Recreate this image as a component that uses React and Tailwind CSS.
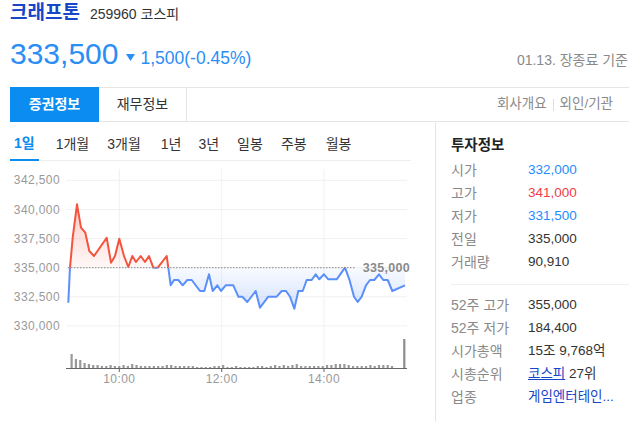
const PTS = [[68.3,301.7],[70,266.7],[72.7,236.7],[77,203.3],[81,226.7],[85.3,231.7],[89.3,250],[94,255],[106.7,236.7],[111,261.7],[115,255],[119.3,237.7],[124,255],[128.3,266],[132.3,255],[136,261],[140.7,255],[145,261],[149,255],[153.3,266.7],[157.7,266.7],[166.7,255],[168.3,266.7],[170.7,284.3],[174,279],[178.3,279],[182.7,284.3],[187.3,279],[191.7,279],[200,290],[204.3,290],[209,273.3],[212.7,290],[217.3,284.3],[221,290],[225.7,284.3],[233.3,284.3],[238.3,295.7],[242.3,295.7],[247.3,301],[255.7,290],[260,306.7],[268.3,295.7],[276.7,295.7],[281.7,290],[286,290],[290,295.7],[294.3,307.7],[298.3,290],[302.7,290],[306.7,279],[311.7,279],[315.7,273.3],[319.3,278.3],[324,273.3],[328.3,278.3],[336.7,278.3],[345,266.7],[349.3,278.3],[354,295.7],[357.7,301],[361.7,295.7],[366,284.3],[370,279],[374.3,279],[379,273.3],[383.3,279],[387.7,279],[392.3,290],[405,284.3]];

const VOL = [14,9,8,5,4,3,3,2,2,3,2,2,3,2,4,3,2,2,2,2,2,2,3,3,2,2,2,2,2,1,1,1,1,2,2,3,1,1,2,1,1,1,1,2,2,1,2,3,2,3,2,3,4,2,2,2,2,2,2,3,3,4,4,4,3,2,2,2,2,3,2,3,3,3,2];

const BASE = 266.7;
const GRID_Y = [179.4, 208.5, 237.6, 266.7, 295.8, 324.9];
const Y_LABELS = ["342,500", "340,000", "337,500", "335,000", "332,500", "330,000"];
const X_TICKS = [[119.3, "10:00"], [221.7, "12:00"], [324, "14:00"]];

function Chart() {
  const line = PTS.map((p, i) => `${i ? "L" : "M"}${p[0]},${p[1]}`).join(" ");
  const area = `${line} L${PTS[PTS.length - 1][0]},${BASE} L${PTS[0][0]},${BASE} Z`;
  return (
    <svg width="425" height="262" viewBox="10 160 425 262" className="block">
      <defs>
        <clipPath id="above"><rect x="0" y="0" width="640" height={BASE} /></clipPath>
        <clipPath id="below"><rect x="0" y={BASE} width="640" height="200" /></clipPath>
        <linearGradient id="redg" x1="0" y1="200" x2="0" y2={BASE} gradientUnits="userSpaceOnUse">
          <stop offset="0" stopColor="#f5533f" stopOpacity="0.32" />
          <stop offset="1" stopColor="#f5533f" stopOpacity="0.04" />
        </linearGradient>
        <linearGradient id="blueg" x1="0" y1={BASE} x2="0" y2="308" gradientUnits="userSpaceOnUse">
          <stop offset="0" stopColor="#5b8ff9" stopOpacity="0.04" />
          <stop offset="1" stopColor="#5b8ff9" stopOpacity="0.26" />
        </linearGradient>
      </defs>
      {GRID_Y.map((y) => (
        <line key={y} x1="66" x2="407" y1={y} y2={y} stroke="#f1f1f1" strokeWidth="1" />
      ))}
      {X_TICKS.map(([x]) => (
        <line key={x} x1={x} x2={x} y1="168" y2="367" stroke="#f1f1f1" strokeWidth="1" />
      ))}
      {GRID_Y.map((y, i) => (
        <text key={i} x="60" y={y} textAnchor="end" dominantBaseline="central" fontSize="12" letterSpacing="0.4" fill="#999" fontFamily="Liberation Sans, sans-serif">{Y_LABELS[i]}</text>
      ))}
      <path d={area} fill="url(#redg)" clipPath="url(#above)" />
      <path d={area} fill="url(#blueg)" clipPath="url(#below)" />
      <line x1="68" x2="356" y1={BASE} y2={BASE} stroke="#888" strokeWidth="1" strokeDasharray="1.5 1.5" />
      <path d={line} fill="none" stroke="#f4533d" strokeWidth="2" strokeLinejoin="round" clipPath="url(#above)" />
      <path d={line} fill="none" stroke="#5b8ff9" strokeWidth="2" strokeLinejoin="round" clipPath="url(#below)" />
      <text x="410" y={BASE} textAnchor="end" dominantBaseline="central" fontSize="12.5" fontWeight="700" letterSpacing="0.3" fill="#8a8a8a" fontFamily="Liberation Sans, sans-serif">335,000</text>
      {VOL.map((h, i) => (
        <rect key={i} x={70.5 + i * 4.33} y={367 - h} width="2.2" height={h} fill="#999" />
      ))}
      <rect x="403.2" y="338" width="2.2" height="29" fill="#8c8c8c" />
      <line x1="66" x2="407" y1="367.5" y2="367.5" stroke="#666" strokeWidth="1" />
      {X_TICKS.map(([x, t]) => (
        <g key={t}>
          <line x1={x} x2={x} y1="367" y2="371" stroke="#666" strokeWidth="1" />
          <text x={x} y="378" textAnchor="middle" dominantBaseline="central" fontSize="12" letterSpacing="0.4" fill="#999" fontFamily="Liberation Sans, sans-serif">{t}</text>
        </g>
      ))}
    </svg>
  );
}

function Row({ label, children }) {
  return (
    <div className="flex items-center h-[23px]">
      <span className="w-[77px] shrink-0 text-[14px] text-[#8a8a8a]">{label}</span>
      <span className="whitespace-nowrap text-[13.5px] text-[#333]">{children}</span>
    </div>
  );
}

export default function App() {
  return (
    <div className="w-[629px] h-[422px] overflow-hidden bg-white text-[#333] font-['Liberation_Sans','Noto_Sans_CJK_KR',sans-serif]">
      <div className="flex items-baseline pl-[10px] h-[28px] pt-[1px]">
        <span className="text-[19px] font-bold text-[#1846c8] leading-[24px]">크래프톤</span>
        <span className="ml-[10px] text-[14px] text-[#333]">259960 코스피</span>
      </div>
      <div className="flex items-baseline justify-between pl-[10px] pr-[1px] h-[59px] pt-[8px]">
        <div className="flex items-baseline text-[#2a8ef5]">
          <span className="text-[30px] leading-[36px]">333,500</span>
          <svg width="9" height="7" viewBox="0 0 9 7" className="ml-[8px] mr-[5px] self-center translate-y-[3px]">
            <path d="M0 0 H9 L4.5 7 Z" fill="#2a8ef5" />
          </svg>
          <span className="text-[17.5px]">1,500(-0.45%)</span>
        </div>
        <span className="text-[14px] text-[#8a8a8a] translate-y-[1px]">01.13. 장종료 기준</span>
      </div>
      <div className="flex h-[35px] ml-[10px]">
        <div className="w-[89px] bg-[#0b8cf0] text-white text-[14px] font-bold flex items-center justify-center">증권정보</div>
        <div className="w-[88px] border-y border-r border-[#e5e5e5] text-[14px] text-[#333] flex items-center justify-center">재무정보</div>
        <div className="flex-1 border-y border-[#e5e5e5] flex items-center justify-end pr-[16px] text-[13.5px] text-[#8a8a8a]">
          <span>회사개요</span>
          <span className="mx-[6px] w-px h-[12px] bg-[#ddd]" />
          <span>외인/기관</span>
        </div>
      </div>
      <div className="flex">
        <div className="w-[425px] ml-[10px]">
          <div className="flex h-[39px] w-[401px] border-b border-[#eee] text-[14px] text-[#333]">
            <div className="h-[39px] -mb-px flex items-center pt-[6px] px-[4px] border-b-2 border-[#0b8cf0] text-[#0b8cf0] font-bold">1일</div>
            <div className="ml-[17px] flex items-center pt-[6px]">1개월</div>
            <div className="ml-[18px] flex items-center pt-[6px]">3개월</div>
            <div className="ml-[20px] flex items-center pt-[6px]">1년</div>
            <div className="ml-[17px] flex items-center pt-[6px]">3년</div>
            <div className="ml-[18px] flex items-center pt-[6px]">일봉</div>
            <div className="ml-[18px] flex items-center pt-[6px]">주봉</div>
            <div className="ml-[19px] flex items-center pt-[6px]">월봉</div>
          </div>
          <Chart />
        </div>
        <div className="w-[194px] h-[301px] border-l border-[#e5e5e5] pl-[15px] pt-[13px]">
          <div className="text-[14.5px] font-bold leading-[20px] text-[#222]">투자정보</div>
          <div className="mt-[4px]">
            <Row label="시가"><span className="text-[#1f8cff]">332,000</span></Row>
            <Row label="고가"><span className="text-[#f23b4b]">341,000</span></Row>
            <Row label="저가"><span className="text-[#1f8cff]">331,500</span></Row>
            <Row label="전일">335,000</Row>
            <Row label="거래량">90,910</Row>
          </div>
          <div className="mt-[10px] border-t border-[#eee] pt-[9px]">
            <Row label="52주 고가">355,000</Row>
            <Row label="52주 저가">184,400</Row>
            <Row label="시가총액">15조 9,768억</Row>
            <Row label="시총순위"><span className="text-[#1846c8] underline">코스피</span> 27위</Row>
            <Row label="업종"><span className="text-[#1846c8]">게임엔터테인...</span></Row>
          </div>
        </div>
      </div>
    </div>
  );
}
